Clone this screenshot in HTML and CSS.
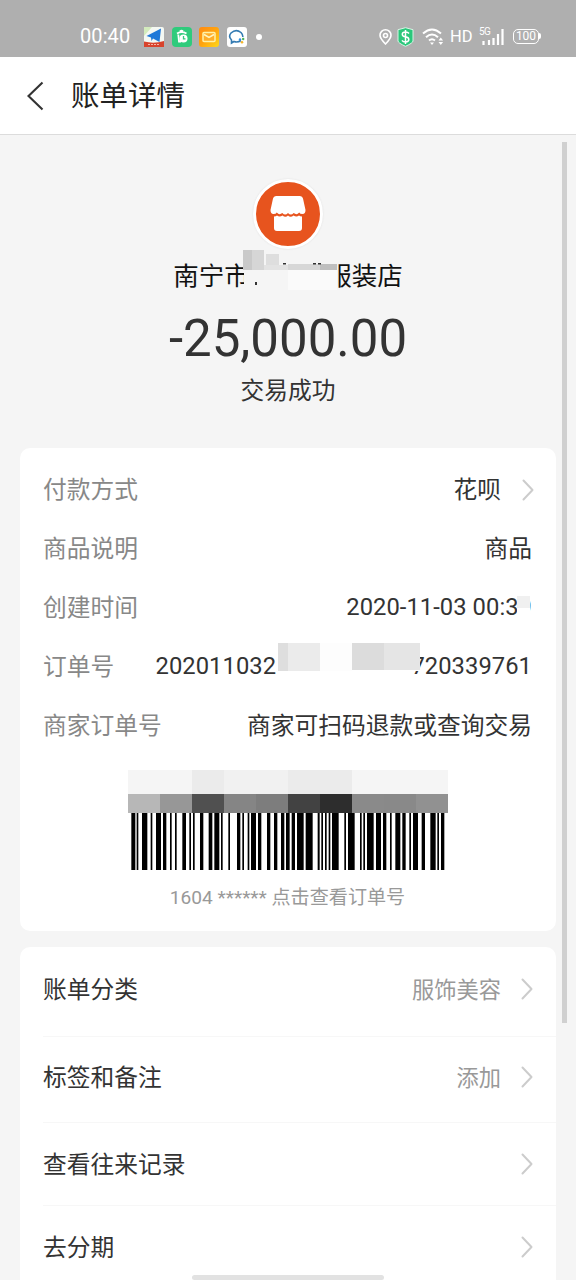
FILE: index.html
```html
<!DOCTYPE html>
<html lang="zh-CN">
<head>
<meta charset="utf-8">
<title>账单详情</title>
<link rel="stylesheet" href="styles.css">
</head>
<body>
<div class="screen">
  <div class="status">
    <span class="clock">00:40</span>
    <div class="apps">
      <svg width="20" height="20" viewBox="0 0 20 20"><rect width="20" height="20" rx="2" fill="#f4f8f3"/><path d="M0 0h8L0 9z" fill="#d3ebbd"/><path d="M0 14.500q10 2.500 20-.5v6H0z" fill="#d8432c"/><path d="M4 17.500h12" stroke="#f3b7a8" stroke-dasharray="2 1"/><path d="M2.500 9 17 1.500 15.500 15 9 11.500 7.500 14 7 10.500z" fill="#1f79d8"/></svg>
      <svg width="20" height="20" viewBox="0 0 20 20"><rect width="20" height="20" rx="4" fill="#2fcb7c"/><path d="M5 6.500q5-3 9.500 0M8 4.500q1.500-1.500 3 0M6.300 7.500l.7 7h2" fill="none" stroke="#fff" stroke-width="1.800"/><circle cx="11.500" cy="11.500" r="4" fill="#fff"/><path d="M11.500 9v2.800h2" fill="none" stroke="#2fcb7c" stroke-width="1.300"/></svg>
      <svg width="20" height="20" viewBox="0 0 20 20"><defs><linearGradient id="mail" x1="0" y1="0" x2="1" y2="1"><stop offset="0" stop-color="#ff8a12"/><stop offset=".5" stop-color="#ffa40f"/><stop offset="1" stop-color="#ffd919"/></linearGradient></defs><rect width="20" height="20" rx="3" fill="url(#mail)"/><rect x="4" y="5.500" width="12" height="9" rx="1" fill="#ffae2a" stroke="#fff2a8" stroke-width="1.500"/><path d="m5 7.500 5 3 5-3" fill="none" stroke="#fff6c4" stroke-width="1.500"/></svg>
      <svg width="20" height="20" viewBox="0 0 20 20"><rect width="20" height="20" rx="3" fill="#fff"/><path d="M14 13.500Q10.500 16 7 14.500L4.500 16V13Q1 9.500 4 6q5-4.500 10-.500 2 2 1.800 4.500" fill="none" stroke="#347bb2" stroke-width="1.600"/><circle cx="13" cy="12.500" r="1.200" fill="#2d8fe0"/><circle cx="16.200" cy="12" r="1.200" fill="#4bb35d"/><circle cx="15" cy="15.200" r="1.300" fill="#f3b52d"/></svg>
      <i class="dot"></i>
    </div>
    <div class="signals">
      <svg class="pin" width="13" height="16" viewBox="0 0 13 16" fill="none" stroke="#fff" stroke-width="1.600"><path d="M6.500 15Q1 9.500 1 6.300a5.500 5.500 0 0 1 11 0Q12 9.500 6.500 15z"/><circle cx="6.500" cy="6.500" r="2"/></svg>
      <svg class="shield" width="17" height="20" viewBox="0 0 17 20"><path d="m8.500.7 7.500 2V14q0 2-7.500 5.300Q1 16 1 14V2.700z" fill="#2bc77b" stroke="#d5f5e4"/><path d="M12 6.500Q11 5 8.500 5 5.300 5 5.300 7.200T8.500 9.800t3.300 2.700T8.500 15Q6 15 5 13.300M8.500 3v14" fill="none" stroke="#fff" stroke-width="1.500"/></svg>
      <svg class="wifi" width="22" height="18" viewBox="0 0 22 18"><g fill="none" stroke="#fff" stroke-width="2"><path d="M1 5.500q9-8 18 0M4 9.300q6-5.500 12 0M7 12.500q3-2.500 6 0"/></g><path d="m8 14.500 2 2.500 2-2.500z M16.500 12.500l2.300-3 2.300 3zM16.500 14l2.300 3 2.300-3z" fill="#fff"/></svg>
      <span class="hd">HD</span>
      <div class="cell"><span class="gen">5G</span><svg width="25" height="18" viewBox="0 0 25 18" stroke="#fff" stroke-width="2.200"><path d="M4.500 13v4M10 12v5M14.500 10v7M19 6v11M23.500 1v16"/></svg></div>
      <span class="battery">100</span>
    </div>
  </div>

  <header class="bar">
    <svg width="18" height="30" viewBox="0 0 18 30"><path d="M15.500 1.500 1.500 15l14 13.500" fill="none" stroke="#333" stroke-width="2.100"/></svg>
    <h1>账单详情</h1>
  </header>

  <main>
    <section class="hero">
      <div class="logo"><svg width="36" height="36" viewBox="0 0 36 36" fill="#fff"><path d="M6 0h24q2.500 0 3 2.500L35.500 14q0 4-3 4-2.500 0-3.300-1.500-2.500 3-5.500.5-3 3-5.700 0-2.700 3-5.700 0-3 2.500-5.500-.5Q6 18 3.500 18q-3 0-3-4L3 2.500Q3.500 0 6 0z"/><path d="M4 20.500q2 0 3-1 2.500 2 5.500 0 3 2.500 5.500 0 2.500 2.500 5.500 0 3 2 5.500 0 1 1 3 1V32q0 3-3 3H7q-3 0-3-3z"/></svg></div>
      <div class="shop">
        <span>南宁市</span><span class="gap"></span><span>服装店</span>
        <svg class="mask" width="98" height="46" viewBox="0 0 98 46"><path d="M1 14h92v30H1z" fill="#f5f5f5"/><path d="M0 4h9v20H0z" fill="#c9c9c9"/><path d="M9 4h12v20H9z" fill="#d6d6d6"/><path d="M23 8h13v12H23z" fill="#dedede"/><path d="M21 19h24v5H21z" fill="#e3e3e3"/><path d="M45 18h32v6H45z" fill="#d7d7d7"/><path d="M77 18h17v6H77z" fill="#bfbfbf"/><path d="M45 24h49v20H45z" fill="#fafafa"/><path d="M12 36h2v3h-2zM40 17h3v1.500h-3zM70 17h3v1.500h-3zM75 17h3v1.500h-3z" fill="#333"/></svg>
      </div>
      <div class="amount">-25,000.00</div>
      <div class="result">交易成功</div>
    </section>

    <section class="card details">
      <div class="row"><span class="key">付款方式</span><span class="val">花呗</span><svg class="chev" viewBox="0 0 12 22"><path d="m1.500 1.500 9 9.500-9 9.500"/></svg></div>
      <div class="row"><span class="key">商品说明</span><span class="val">商品</span></div>
      <div class="row"><span class="key">创建时间</span><span class="val digits">2020-11-03 00:39<i class="mask-time"></i></span></div>
      <div class="row"><span class="key">订单号</span><span class="val digits order"><span>202011032</span><span>720339761</span><svg class="mask-order" width="144" height="40" viewBox="0 0 144 40"><path d="M0 5h142v28H0z" fill="#fff"/><path d="M0 5h10v28H0z" fill="#dedede"/><path d="M10 5h32v28H10z" fill="#ebebeb"/><path d="M42 5h32v28H42z" fill="#fdfdfd"/><path d="M74 5h32v27H74z" fill="#dcdcdc"/><path d="M106 5h36v27h-36z" fill="#e5e5e5"/></svg></span></div>
      <div class="row"><span class="key">商家订单号</span><span class="val">商家可扫码退款或查询交易</span></div>
      <svg class="code" width="320" height="102" viewBox="0 0 320 102">
        <g shape-rendering="crispEdges">
        <path d="M0 0h320v25H0z" fill="#f5f5f5"/><path d="M64 0h32v25H64zM160 0h64v25h-64z" fill="#ebebeb"/><path d="M96 0h64v25H96z" fill="#f1f1f1"/>
        <path d="M0 24h32v19H0z" fill="#b7b7b7"/><path d="M32 24h32v19H32z" fill="#979797"/><path d="M64 24h32v19H64z" fill="#505050"/><path d="M96 24h32v19H96z" fill="#858585"/><path d="M128 24h32v19h-32z" fill="#7d7d7d"/><path d="M160 24h32v19h-32z" fill="#424242"/><path d="M192 24h32v19h-32z" fill="#2d2d2d"/><path d="M224 24h32v19h-32z" fill="#8a8a8a"/><path d="M256 24h32v19h-32z" fill="#898989"/><path d="M288 24h32v19h-32z" fill="#919191"/>
        </g>
        <g transform="translate(-8 43) scale(.33333)"><path d="M34 0h12v171H34zM50 0h5v171h-5zM66 0h16v171H66zM92 0h5v171h-5zM108 0h15v171h-15zM129 0h10v171h-10zM150 0h5v171h-5zM165 0h5v171h-5zM187 0h11v171h-11zM208 0h5v171h-5zM219 0h5v171h-5zM240 0h10v171h-10zM266 0h11v171h-11zM283 0h15v171h-15zM303 0h5v171h-5zM325 0h5v171h-5zM351 0h10v171h-10zM367 0h5v171h-5zM383 0h5v171h-5zM393 0h15v171h-15zM414 0h10v171h-10zM441 0h10v171h-10zM462 0h10v171h-10zM483 0h10v171h-10zM498 0h11v171h-11zM515 0h10v171h-10zM531 0h20v171h-20zM557 0h21v171h-21zM593 0h6v171h-6zM604 0h5v171h-5zM615 0h5v171h-5zM626 0h5v171h-5zM636 0h20v171h-20zM673 0h5v171h-5zM684 0h20v171h-20zM720 0h5v171h-5zM730 0h5v171h-5zM741 0h20v171h-20zM768 0h15v171h-15zM789 0h10v171h-10zM810 0h5v171h-5zM826 0h15v171h-15zM847 0h10v171h-10zM868 0h5v171h-5zM879 0h15v171h-15zM905 0h10v171h-10zM931 0h16v171h-16zM952 0h5v171h-5zM963 0h10v171h-10z"/></g>
      </svg>
      <div class="caption">1604 ****** 点击查看订单号</div>
    </section>

    <section class="card menu">
      <div class="item first"><span class="name">账单分类</span><span class="hint">服饰美容</span><svg class="chev" viewBox="0 0 12 22"><path d="m1.500 1.500 9 9.500-9 9.500"/></svg></div>
      <div class="item second"><span class="name">标签和备注</span><span class="hint">添加</span><svg class="chev" viewBox="0 0 12 22"><path d="m1.500 1.500 9 9.500-9 9.500"/></svg></div>
      <div class="item third"><span class="name">查看往来记录</span><svg class="chev" viewBox="0 0 12 22"><path d="m1.500 1.500 9 9.500-9 9.500"/></svg></div>
      <div class="item third"><span class="name">去分期</span><svg class="chev" viewBox="0 0 12 22"><path d="m1.500 1.500 9 9.500-9 9.500"/></svg></div>
    </section>
  </main>
  <i class="scrollbar"></i>
  <i class="home"></i>
</div>
</body>
</html>
```
FILE: styles.css
```css
* { box-sizing: border-box; }
body { margin: 0; font-family: Roboto, "Noto Sans CJK SC", sans-serif; color: #333; background: #f5f5f5; }
svg { display: block; flex: none; }
.screen { position: relative; width: 576px; height: 1280px; overflow: hidden; background: #f5f5f5; }

.status { height: 57px; padding: 16px 37px 0 80px; display: flex; align-items: flex-start; background: #afafaf; color: #fff; }
.clock { width: 64px; font-size: 20px; line-height: 41px; height: 41px; letter-spacing: .1px; }
.apps { height: 41px; display: flex; align-items: center; gap: 7.700px; }
.dot { width: 6px; height: 6px; margin-left: 1px; border-radius: 50%; background: #fff; }
.signals { height: 41px; margin-left: auto; display: flex; align-items: center; }
.pin { margin-right: 5px; }
.shield { margin-right: 8px; }
.wifi { margin-right: 6px; }
.hd { width: 29px; font-size: 16.500px; line-height: 41px; }
.cell { position: relative; width: 34px; }
.gen { position: absolute; left: 0; top: -1px; font-size: 10px; line-height: 10px; letter-spacing: -.5px; }
.battery { position: relative; width: 26px; height: 15px; border: 1.500px solid #fff; border-radius: 5px; font-size: 12px; line-height: 13px; text-align: center; }
.battery::after { content: ""; position: absolute; right: -3px; top: 3px; width: 2px; height: 6px; background: #fff; border-radius: 0 2px 2px 0; }

.bar { height: 78px; padding-left: 27px; display: flex; align-items: center; gap: 26px; background: #fff; border-bottom: 1px solid #dcdcdc; }
h1 { margin: 0; padding-top: 3px; font-size: 28.500px; font-weight: 400; line-height: 40px; color: #222; }

main { padding: 0 20px; }
.hero { height: 313px; padding-top: 44px; display: flex; flex-direction: column; align-items: center; }
.logo { width: 70px; height: 70px; border: 3px solid #fff; border-radius: 50%; background: #e7541e; display: flex; align-items: center; justify-content: center; box-shadow: 0 0 2px #ddd; }
.shop { position: relative; height: 36px; margin-top: 9px; display: flex; font-size: 25.500px; line-height: 36px; color: #111; }
.gap { width: 76.500px; }
.mask { position: absolute; left: 70px; top: -12px; }
.amount { margin-top: 15px; font-size: 51px; line-height: 60px; }
.result { margin-top: 4px; font-size: 23.750px; line-height: 36px; }

.card { background: #fff; border-radius: 10px; }
.details { height: 483px; padding: 12px 24px 0 23px; }
.row { height: 59.100px; display: flex; align-items: center; font-size: 23.750px; line-height: 36px; }
.key { padding-top: 1px; color: #888; white-space: nowrap; }
.val { position: relative; padding-top: 1px; margin-left: auto; white-space: nowrap; }
.digits { padding: 0 0 1px; letter-spacing: .05px; }
.chev { width: 12px; height: 22px; margin-left: 21px; margin-right: -2px; fill: none; stroke: #ccc; stroke-width: 2; stroke-linecap: round; stroke-linejoin: round; }
.mask-time { position: absolute; right: 2px; top: 7px; width: 13px; height: 24px; background: linear-gradient(#f0f0f0 50%, #fff 50%); }
.order { width: 376.500px; display: flex; justify-content: space-between; }
.mask-order { position: absolute; left: 122px; top: -10px; }
.code { margin: 14.500px 0 0 85px; }
.caption { margin-top: 10.500px; font-size: 19.100px; line-height: 32px; text-align: center; color: #999; }

.menu { margin-top: 16px; padding-left: 23px; }
.item { padding-right: 22px; display: flex; align-items: center; border-bottom: 1px solid #f7f7f7; font-size: 23.750px; line-height: 36px; }
.name, .hint { padding-top: 2px; }
.first { height: 90px; padding-bottom: 5px; }
.second { height: 86px; padding-bottom: 5px; }
.third { height: 83px; }
.hint { margin-left: auto; font-size: 22.250px; color: #999; }
.item .chev { margin-left: 20px; margin-right: 1px; }
.item .name + .chev { margin-left: auto; }

.scrollbar { position: absolute; left: 562px; top: 142px; width: 5px; height: 881px; background: #d0d0d0; }
.home { position: absolute; left: 192px; top: 1275px; width: 192px; height: 5px; border-radius: 3px; background: #e2e2e2; }
```
